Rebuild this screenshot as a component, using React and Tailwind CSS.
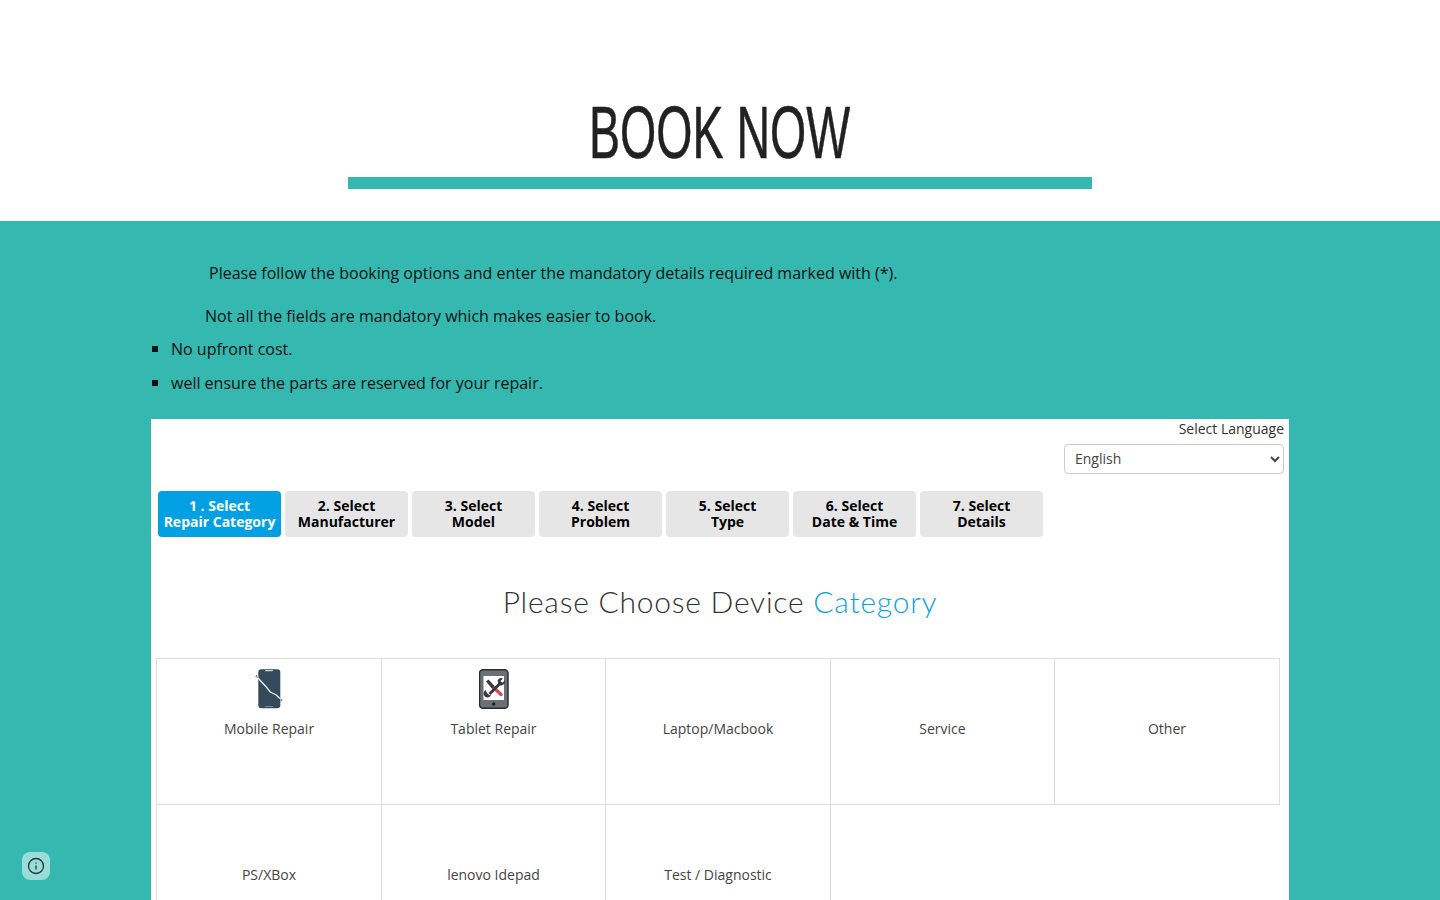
import { Info } from "lucide-react";

const steps = [
  ["1 . Select", "Repair Category"],
  ["2. Select", "Manufacturer"],
  ["3. Select", "Model"],
  ["4. Select", "Problem"],
  ["5. Select", "Type"],
  ["6. Select", "Date & Time"],
  ["7. Select", "Details"],
];

const PhoneIcon = () => (
  <svg viewBox="0 0 30 40" className="h-10 w-[30px]">
    <rect x="4.300" y="0.300" width="22" height="39" rx="3" fill="#34495a" />
    <rect x="11" y="1" width="8" height="1.200" rx="0.600" fill="#c9d3d8" />
    <rect x="11" y="37.300" width="8" height="0.800" rx="0.400" fill="#8fa0aa" />
    <path d="M3.500 8.500l8.800 9.500 4 5 6 3 3.500 3.500" fill="none" stroke="#eef4f5" strokeWidth="1.300" />
    <path d="M1.500 7.500l2 1M2.500 6l.5 2M27 30.500l1.500.5M27 32.500l.5-2" stroke="#34495a" strokeWidth="0.700" />
  </svg>
);

const TabletIcon = () => (
  <svg viewBox="0 0 30 40" className="h-10 w-[30px]">
    <rect x="0.500" y="0.800" width="28.500" height="38.400" rx="3.500" fill="#6b7074" stroke="#2a2d2f" strokeWidth="1.500" />
    <rect x="4.500" y="7" width="20.500" height="24" fill="#ffffff" />
    <circle cx="14.700" cy="35" r="1.700" fill="#1f2224" />
    {/* screwdriver */}
    <path d="M14 18l8 7.500" stroke="#c4505a" strokeWidth="3.400" strokeLinecap="round" />
    <path d="M7 12.500l2.500-2 6 6.500-2.500 2.500z" fill="#35393c" />
    {/* wrench */}
    <path d="M21.500 14L10.500 25" stroke="#35393c" strokeWidth="3" />
    <path d="M18.500 11.500a4.500 4.500 0 0 1 5.500-2l-2.500 2.400 1.800 1.800 2.700-2.400a4.500 4.500 0 0 1-6 5z" fill="#35393c" />
    <path d="M6.500 21a4 4 0 1 0 5.500 5.500l-2.200-.8-1.800-1.800z" fill="#35393c" />
  </svg>
);

const Cell = ({ label, icon, first, last }) => (
  <div
    className={`flex flex-col items-center pt-2.5 border-l border-b border-[#dddddd] ${
      first ? "h-[147px] border-t" : "h-[146px]"
    } ${last ? "border-r" : ""}`}
  >
    <div className="h-10 flex items-center justify-center">{icon}</div>
    <div className="mt-2.5 text-[14px] leading-5 text-[#444444]">{label}</div>
  </div>
);

export default function App() {
  return (
    <div className="relative h-screen overflow-hidden bg-[#35b8b0] font-['Open_Sans',sans-serif] text-[#111111]">
      {/* Title */}
      <header className="h-[221px] bg-white flex flex-col items-center pt-[88px]">
        <h1 className="h-[89px] text-[74px] leading-[89px] text-[#212121] font-['Liberation_Sans',sans-serif] scale-x-[0.629] whitespace-nowrap [-webkit-text-stroke:0.5px_#212121]">
          BOOK NOW
        </h1>
        <div className="w-[744px] h-3 bg-[#35b8b0]"></div>
      </header>

      {/* Intro */}
      <section className="w-[1138px] mx-auto pt-[41px] text-[16px] leading-[22px]">
        <p className="pl-[58px]">Please follow the booking options and enter the mandatory details required marked with (*).</p>
        <p className="pl-[54px] mt-[21px]">Not all the fields are mandatory which makes easier to book.</p>
        <ul className="mt-[11px] flex flex-col gap-3">
          <li className="flex items-center">
            <span className="w-1.5 h-1.5 bg-[#111111] ml-px mr-[13px]"></span>No upfront cost.
          </li>
          <li className="flex items-center">
            <span className="w-1.5 h-1.5 bg-[#111111] ml-px mr-[13px]"></span>well ensure the parts are reserved for your repair.
          </li>
        </ul>
      </section>

      {/* Booking card */}
      <main className="w-[1138px] mx-auto mt-[25px] bg-white pb-10">
        <div className="flex flex-col items-end pr-[5px]">
          <span className="text-[14px] leading-5 text-[#333333]">Select Language</span>
          <select className="mt-[5px] w-[220px] h-[30px] pl-1.5 pr-1 pb-0.5 bg-white border border-[#cccccc] rounded text-[14px] leading-5 text-[#444444]">
            <option>English</option>
          </select>
        </div>

        <div className="flex gap-1 pl-[7px] mt-[17px]">
          {steps.map(([a, b], i) => (
            <div
              key={a}
              className={`w-[123px] h-[46px] rounded flex flex-col items-center justify-center text-[14px] leading-4 font-bold ${
                i === 0 ? "bg-[#00a0e3] text-white" : "bg-[#e6e6e6] text-black"
              }`}
            >
              <span>{a}</span>
              <span>{b}</span>
            </div>
          ))}
        </div>

        <h2 className="mt-11 text-center text-[30px] leading-10 tracking-[0.76px] text-[#333333] font-['Lato',sans-serif] font-light">
          Please Choose Device <span className="text-[#12a0dc]">Category</span>
        </h2>

        <div className="grid grid-cols-[225px_224px_225px_224px_226px] ml-[5px] mt-[37px]">
          <Cell first label="Mobile Repair" icon={<PhoneIcon />} />
          <Cell first label="Tablet Repair" icon={<TabletIcon />} />
          <Cell first label="Laptop/Macbook" />
          <Cell first label="Service" />
          <Cell first label="Other" last />
          <Cell label="PS/XBox" />
          <Cell label="lenovo Idepad" />
          <Cell label="Test / Diagnostic" />
          <div className="border-l border-[#dddddd]"></div>
        </div>
      </main>

      {/* Accessibility badge */}
      <button className="absolute left-[22px] top-[852px] w-7 h-7 rounded-lg bg-[#9adcd8] flex items-center justify-center text-[#1f3a3a]">
        <Info className="w-[18px] h-[18px]" strokeWidth={1.75} />
      </button>
    </div>
  );
}
